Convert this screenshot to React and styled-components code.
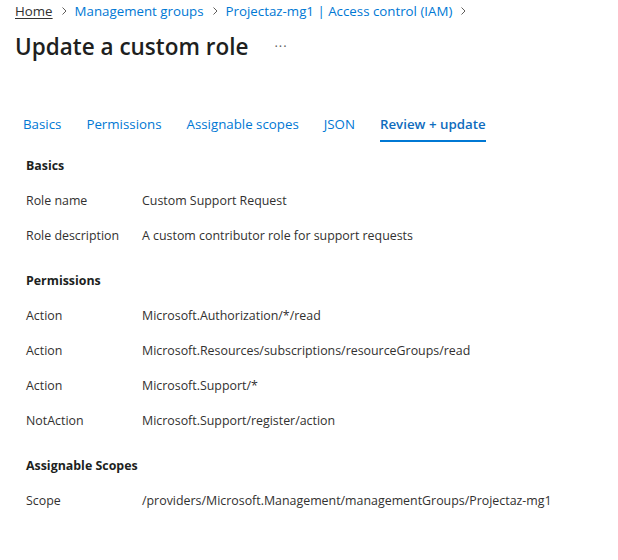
import React from "react";
import styled, { createGlobalStyle } from "styled-components";

const GlobalStyle = createGlobalStyle`
  html, body {
    margin: 0;
    background: #fff;
  }
  body {
    font-family: "Open Sans", "Noto Sans", sans-serif;
    color: #323130;
    -webkit-font-smoothing: antialiased;
  }
`;

const crumbs = [
  { label: "Home", home: true },
  { label: "Management groups" },
  { label: "Projectaz-mg1 | Access control (IAM)" }
];

const tabs = ["Basics", "Permissions", "Assignable scopes", "JSON", "Review + update"];

const sections = [
  {
    title: "Basics",
    rows: [
      ["Role name", "Custom Support Request"],
      ["Role description", "A custom contributor role for support requests"]
    ]
  },
  {
    title: "Permissions",
    rows: [
      ["Action", "Microsoft.Authorization/*/read"],
      ["Action", "Microsoft.Resources/subscriptions/resourceGroups/read"],
      ["Action", "Microsoft.Support/*"],
      ["NotAction", "Microsoft.Support/register/action"]
    ]
  },
  {
    title: "Assignable Scopes",
    rows: [["Scope", "/providers/Microsoft.Management/managementGroups/Projectaz-mg1"]]
  }
];

function Chevron() {
  return (
    <ChevronIcon width="8" height="10" viewBox="0 0 8 10">
      <path d="M2.5 1.5 L6 5 L2.5 8.5" fill="none" stroke="#605e5c" strokeWidth="1" />
    </ChevronIcon>
  );
}

export default function App() {
  return (
    <>
      <GlobalStyle />
      <Page>
        <Breadcrumb>
          {crumbs.map((c) => (
            <Crumb key={c.label}>
              <CrumbLink $home={c.home}>{c.label}</CrumbLink>
              <Chevron />
            </Crumb>
          ))}
        </Breadcrumb>

        <TitleRow>
          <Title>Update a custom role</Title>
          <More>···</More>
        </TitleRow>

        <Tabs>
          {tabs.map((t, i) => (
            <Tab key={t} $active={i === tabs.length - 1}>
              {t}
            </Tab>
          ))}
        </Tabs>

        <Review>
          {sections.map((s) => (
            <Section key={s.title}>
              <SectionTitle>{s.title}</SectionTitle>
              {s.rows.map(([label, value], i) => (
                <Row key={i}>
                  <Label>{label}</Label>
                  <Value>{value}</Value>
                </Row>
              ))}
            </Section>
          ))}
        </Review>
      </Page>
    </>
  );
}

const Page = styled.div`
  padding: 2px 15px 20px;
  font-size: 12.4px;
`;

const Breadcrumb = styled.div`
  display: flex;
  align-items: center;
  height: 18px;
  font-size: 13.3px;
`;

const Crumb = styled.div`
  display: flex;
  align-items: center;
`;

const CrumbLink = styled.span`
  color: ${(p) => (p.$home ? "#323130" : "#0078d4")};
  text-decoration: ${(p) => (p.$home ? "underline" : "none")};
  text-underline-offset: 2px;
`;

const ChevronIcon = styled.svg`
  margin: 0 7px 0 7px;
`;

const TitleRow = styled.div`
  display: flex;
  align-items: center;
  margin-top: 10px;
  height: 32px;
`;

const Title = styled.h1`
  margin: 0;
  font-size: 22.5px;
  font-weight: 600;
  color: #201f1e;
`;

const More = styled.span`
  margin-left: 26px;
  font-size: 13px;
  color: #605e5c;
  letter-spacing: 1px;
`;

const Tabs = styled.div`
  display: flex;
  gap: 25px;
  margin-top: 47px;
  padding-left: 8px;
`;

const Tab = styled.div`
  padding: 6px 0 7px;
  font-size: 13.3px;
  color: ${(p) => (p.$active ? "#0f6cbd" : "#0078d4")};
  font-weight: ${(p) => (p.$active ? 600 : 400)};
  border-bottom: 2px solid ${(p) => (p.$active ? "#0078d4" : "transparent")};
`;

const Review = styled.div`
  padding-left: 11px;
  margin-top: 14px;
`;

const Section = styled.div`
  margin-bottom: 10px;
`;

const SectionTitle = styled.div`
  height: 35px;
  line-height: 20px;
  font-weight: 700;
  color: #201f1e;
`;

const Row = styled.div`
  display: grid;
  grid-template-columns: 116px 1fr;
  height: 35px;
  line-height: 20px;
`;

const Label = styled.div``;

const Value = styled.div``;
